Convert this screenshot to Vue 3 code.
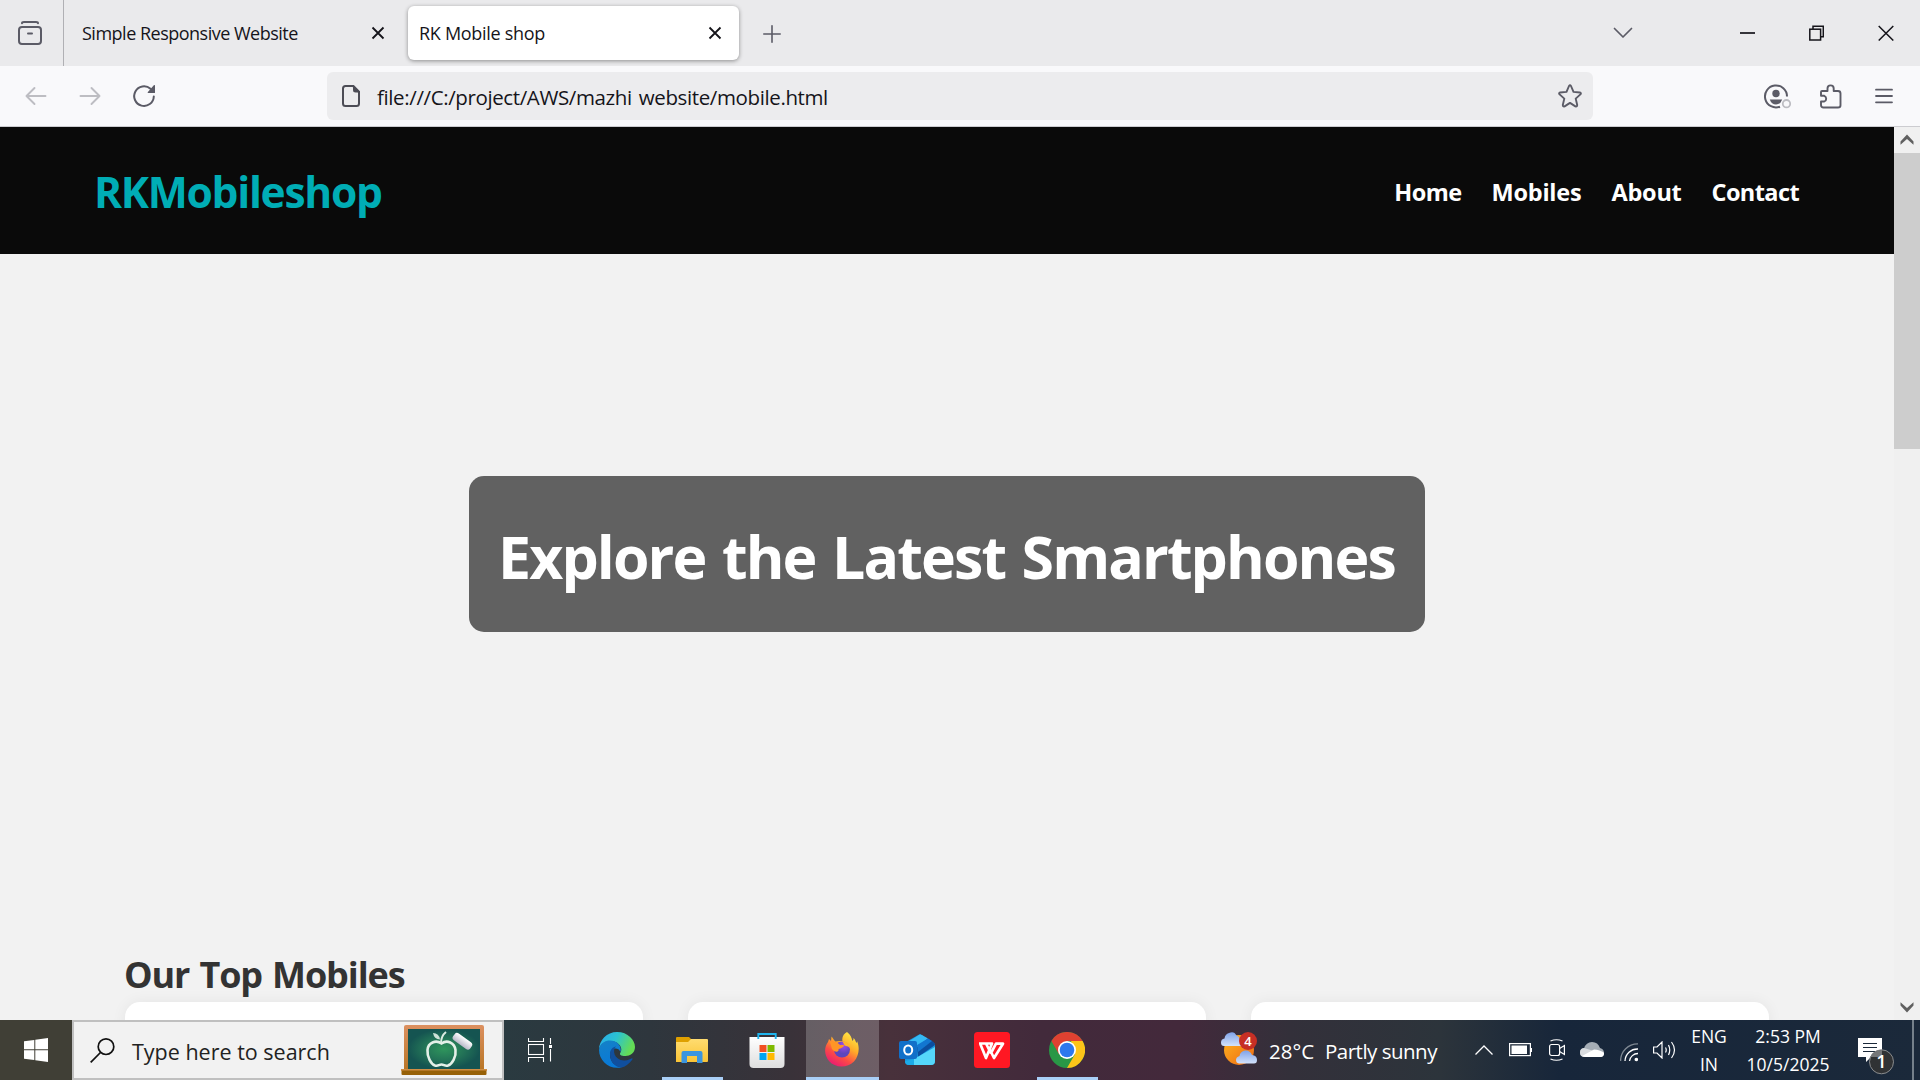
<script setup>
const links = [
  { label: 'Home', cls: 'n1' },
  { label: 'Mobiles', cls: 'n2' },
  { label: 'About', cls: 'n3' },
  { label: 'Contact', cls: 'n4' },
]
</script>

<template>
  <div class="screen">
    <div class="tabs">
      <div class="view">
        <svg width="24" height="24" viewBox="0 0 24 24" fill="none" stroke="#5b5b66" stroke-width="2" stroke-linecap="round"><path d="M4 2.2Q4 1 6 1H18Q20 1 20 2.2" /><rect x="1" y="6" width="22" height="17" rx="3" /><path d="M10 12.5H14" /></svg>
      </div>
      <div class="tab plain">
        <span class="t1">Simple Responsive Website</span>
        <svg width="14" height="14" viewBox="0 0 14 14" stroke="#15141a" stroke-width="1.8"><path d="M1.5 1.5L12.500 12.500M12.500 1.500L1.500 12.500" /></svg>
      </div>
      <div class="tab active">
        <span class="t2">RK Mobile shop</span>
        <svg width="14" height="14" viewBox="0 0 14 14" stroke="#15141a" stroke-width="1.8"><path d="M1.5 1.5L12.500 12.500M12.500 1.500L1.500 12.500" /></svg>
      </div>
      <svg class="plus" width="18" height="18" viewBox="0 0 18 18" stroke="#5b5b66" stroke-width="1.6" stroke-linecap="round"><path d="M9 .8V17.200M.8 9H17.200" /></svg>
      <svg class="down" width="20" height="12" viewBox="0 0 20 12" fill="none" stroke="#5b5b66" stroke-width="1.7" stroke-linecap="round" stroke-linejoin="round"><path d="M1.500 1.500L10 10L18.500 1.500" /></svg>
      <div class="wins">
        <svg width="15" height="16" viewBox="0 0 15 16"><path d="M0 8H15" stroke="#15141a" stroke-width="1.700" /></svg>
        <svg width="15" height="16" viewBox="0 0 15 16" fill="none" stroke="#15141a" stroke-width="1.500"><rect x=".8" y="4.200" width="10.800" height="10.800" /><path d="M4 4V1.200H14.300V11.700H12" /></svg>
        <svg width="16" height="16" viewBox="0 0 16 16" stroke="#15141a" stroke-width="1.500"><path d="M.7 1L15.300 15.500M15.300 1L.7 15.500" /></svg>
      </div>
    </div>

    <div class="bar">
      <svg class="back" width="22" height="20" viewBox="0 0 22 20" fill="none" stroke="#bdbdc2" stroke-width="1.900" stroke-linecap="round" stroke-linejoin="round"><path d="M9.500 2L1.500 10L9.500 18M1.500 10H20.500" /></svg>
      <svg class="fwd" width="22" height="20" viewBox="0 0 22 20" fill="none" stroke="#bdbdc2" stroke-width="1.900" stroke-linecap="round" stroke-linejoin="round"><path d="M12.500 2L20.500 10L12.500 18M20.500 10H1.500" /></svg>
      <svg class="reload" width="24" height="24" viewBox="0 0 24 24" fill="none"><path d="M21.800 12.500A9.800 9.800 0 1 1 18.500 4.800" stroke="#5b5b66" stroke-width="2" stroke-linecap="round" /><path d="M23 1.600V8.500Q23 9 22.500 9H16.200Q15 9 15.900 8L21.800 1.300Q23 .5 23 1.600Z" fill="#5b5b66" /></svg>
      <div class="url">
        <svg width="18" height="22" viewBox="0 0 18 22" fill="none"><path d="M11 1H3.500Q1 1 1 3.500V18.500Q1 21 3.500 21H14.500Q17 21 17 18.500V7Z" stroke="#4c4c55" stroke-width="2" /><path d="M11 0V5Q11 7.500 13.500 7.500H18V6.500L12 .3Z" fill="#4c4c55" /></svg>
        <span class="t3">file:///C:/project/AWS/mazhi website/mobile.html</span>
        <svg class="star" width="24" height="24" viewBox="0 0 24 24" fill="none" stroke="#5b5b66" stroke-width="1.900" stroke-linejoin="round"><path d="M11 2Q12 .6 13 2L15.500 7.900L21.800 8.500Q23.600 9 22.400 10.400L17.700 14.600L19.200 21Q19.200 23 17.400 22.400L12 18.900L6.600 22.400Q4.800 23 4.800 21L6.300 14.600L1.600 10.400Q.4 9 2.200 8.500L8.500 7.900Z" /></svg>
      </div>
      <div class="tools">
        <svg width="28" height="25" viewBox="0 0 28 25" fill="none"><path d="M23 12.500A11 11 0 1 0 16 22.700" stroke="#5b5b66" stroke-width="2" /><circle cx="12" cy="9.500" r="3.700" fill="#5b5b66" /><path d="M5.800 15.500H18.200Q16.500 20.500 12 20.500T5.800 15.500Z" fill="#5b5b66" /><circle cx="22.500" cy="19.700" r="3.700" stroke="#bdbdc2" stroke-width="1.800" /></svg>
        <svg width="22" height="25" viewBox="0 0 22 25" fill="none" stroke="#5b5b66" stroke-width="1.900" stroke-linejoin="round"><path d="M2 7H7.500V4.500A3.100 3.100 0 0 1 13.700 4.500V7H18Q20.500 7 20.500 9.500V21.200Q20.500 23.500 18 23.500H3.500Q1 23.500 1 21V17.500H4.300A3.100 3.100 0 0 0 4.300 11.800H1V8Q1 7 2 7Z" /></svg>
        <svg width="18" height="16" viewBox="0 0 18 16" stroke="#5b5b66" stroke-width="1.800" stroke-linecap="round"><path d="M1 1.700H17M1 8H17M1 14.300H17" /></svg>
      </div>
    </div>

    <div class="viewport">
      <div class="page">
        <header>
          <div class="logo">RKMobileshop</div>
          <nav><a v-for="l in links" :key="l.label" :class="l.cls">{{ l.label }}</a></nav>
        </header>
        <section class="hero"><h1><span>Explore the Latest Smartphones</span></h1></section>
        <section class="top">
          <h2>Our Top Mobiles</h2>
          <div class="cards"><div class="card"></div><div class="card"></div><div class="card"></div></div>
        </section>
      </div>
      <div class="scroll">
        <div class="btn up"><svg width="14" height="11" viewBox="0 0 14 11"><path d="M.5 7.500L7 .5L13.500 7.500V10.700L7 5L.5 10.700Z" fill="#606060" /></svg></div>
        <div class="thumb"></div>
        <div class="btn end"><svg width="14" height="11" viewBox="0 0 14 11"><path d="M.5 3.500L7 10.500L13.500 3.500V.3L7 6L.5 .3Z" fill="#606060" /></svg></div>
      </div>
    </div>

    <div class="taskbar">
      <div class="start"><svg width="24" height="24" viewBox="0 0 24 24" fill="#fff"><path d="M0 3.200L10.300 1.900V11.300H0ZM11.300 1.700L24 0V11.300H11.300ZM0 12.300H10.300V22L0 20.800ZM11.300 12.300H24V24L11.300 22.300Z" /></svg></div>
      <div class="search">
        <svg class="mag" width="25" height="25" viewBox="0 0 25 25" fill="none" stroke="#111" stroke-width="1.700"><circle cx="16" cy="8.700" r="7.800" /><path d="M10.500 14.500L.7 24.300" /></svg>
        <span class="t4">Type here to search</span>
        <svg class="board" width="86" height="50" viewBox="0 0 86 50">
          <defs>
            <radialGradient id="bg"><stop offset="0" stop-color="#2f955c" /><stop offset=".55" stop-color="#237457" /><stop offset="1" stop-color="#155451" /></radialGradient>
            <linearGradient id="wd" x1="0" y1="0" x2="0" y2="1"><stop offset="0" stop-color="#dc9060" /><stop offset="1" stop-color="#b87524" /></linearGradient>
            <linearGradient id="ck" x1="0" y1="0" x2="0" y2="1"><stop offset="0" stop-color="#fff" /><stop offset="1" stop-color="#b8b8c8" /></linearGradient>
          </defs>
          <rect x="3" y="0" width="80" height="46" rx="2" fill="url(#wd)" />
          <rect x="7" y="4" width="72" height="40" fill="url(#bg)" />
          <rect x="0" y="44" width="86" height="2" fill="#cf8e45" /><rect x=".5" y="45.500" width="85" height="4.500" rx="1" fill="#976107" />
          <path d="M40.500 18.500C35 14.500 27 17.500 26.500 25C26 32 30 39 34 40.500C37 41.500 38 39.500 40.500 39.500S44 41.500 47 40.500C51 39 55.500 32 54.500 25C53.500 17.500 46 14.500 40.500 18.500Z" fill="none" stroke="#e4f0e8" stroke-width="2.600" />
          <path d="M40 18Q40 11 45 7" fill="none" stroke="#dcebe2" stroke-width="2" /><path d="M39 14.500Q33 14 32 8Q38 8 39 14.500Z" fill="#cfe3d8" />
          <rect x="-10" y="-4.200" width="21" height="8.400" rx="3" transform="translate(61 16) rotate(36)" fill="url(#ck)" />
        </svg>
      </div>
      <div class="task tv"><svg width="24" height="24" viewBox="0 0 24 24" fill="none" stroke="#fff" stroke-width="1.100"><path d="M.5 0V3.500H15.500V0M.5 24V19.500H15.500V24M22.500 0V6M22.500 11V23.500" /><rect x=".5" y="6.500" width="15" height="10" /><rect x="21" y="7" width="3" height="3" fill="#fff" stroke="none" /></svg></div>
      <div class="task"><svg width="36" height="36" viewBox="0 0 36 36">
        <defs><linearGradient id="e1" x1="0" y1="0" x2="1" y2=".35"><stop offset="0" stop-color="#28a9ee" /><stop offset=".5" stop-color="#2bc3d2" /><stop offset="1" stop-color="#64dc55" /></linearGradient><linearGradient id="e2" x1="0" y1="0" x2=".3" y2="1"><stop offset="0" stop-color="#1581c6" /><stop offset="1" stop-color="#0879d8" /></linearGradient></defs>
        <path d="M0 18C0 8 8 0 18 0C29 0 36 8 36 15C36 21 31 24 26.500 24C21.500 24 20 22.500 21.500 20.500C24 17 21 10 13 9C6 8.500 1 12 0 18Z" fill="url(#e1)" />
        <path d="M0 18C1 11 6 8.500 11 8.500C18 8.500 23 14 21.500 20C19 14 11 16 11 23C11 30 17 35 23 35.200C11 38.500 0 29 0 18Z" fill="url(#e2)" />
        <path d="M11 22C11 17.500 14 14.800 17 14.500C13 18 15 28 25 28.500C29 28.700 31.500 26.800 33 26.300C34 26.200 33.500 27.500 33 28C30 32 26 35 22.500 35.500C15 35 11 29 11 22Z" fill="#104f9e" />
      </svg></div>
      <div class="task open"><svg width="32" height="26" viewBox="0 0 32 26"><defs><linearGradient id="f1" x1="0" y1="0" x2="0" y2="1"><stop offset="0" stop-color="#ffdc70" /><stop offset="1" stop-color="#fac436" /></linearGradient></defs><path d="M0 1Q0 0 1 0H13L15 2V6H0Z" fill="#dfa000" /><path d="M0 5H12L15 2H31Q32 2 32 3V24Q32 25 31 25H0Z" fill="url(#f1)" /><path d="M5.500 26V16Q5.500 14 7.500 14H24.500Q26.500 14 26.500 16V26H21V19H11V26Z" fill="#3b95df" /></svg></div>
      <div class="task"><svg width="36" height="36" viewBox="0 0 36 36"><defs><linearGradient id="s1" x1="0" y1="0" x2="0" y2="1"><stop offset="0" stop-color="#fff" /><stop offset="1" stop-color="#dedede" /></linearGradient></defs><path d="M.5 5H35.500V32Q35.500 36 31.500 36H4.500Q.5 36 .5 32Z" fill="url(#s1)" /><path d="M9.300 7V2H26.700V7" fill="none" stroke="#20b5ee" stroke-width="1.900" /><path d="M10.500 13H17.500V20H10.500Z" fill="#f25022" /><path d="M18.500 13H25.500V20H18.500Z" fill="#7fba00" /><path d="M10.500 21H17.500V28H10.500Z" fill="#00a4ef" /><path d="M18.500 21H25.500V28H18.500Z" fill="#ffb900" /></svg></div>
      <div class="task ff"><svg width="36" height="36" viewBox="0 0 36 36">
        <defs><linearGradient id="x1" x1=".85" y1="0" x2=".25" y2="1"><stop offset="0" stop-color="#fff24a" /><stop offset=".4" stop-color="#ffac28" /><stop offset=".7" stop-color="#fc4b45" /><stop offset="1" stop-color="#e81777" /></linearGradient><radialGradient id="x2" cx=".6" cy=".25"><stop offset="0" stop-color="#a44bea" /><stop offset="1" stop-color="#5c46bd" /></radialGradient></defs>
        <path d="M23 0C27 3 27.500 6 28.500 9C29.500 8 29.500 7 29.500 6C31 7 31.500 9.500 32.500 11C33 10.500 33 9.500 33 9C36 16 35 24 30 29.500C23 36.500 11 36 5 29C0 23 0 15 4 10L5 7L7 9L7.500 4.500C9 6 10 8.500 11.500 9.500C14 8.500 17 9 18.500 9C17.500 5 20 1.500 23 0Z" fill="url(#x1)" />
        <circle cx="18" cy="17.500" r="8" fill="url(#x2)" />
        <path d="M6 10C10 9 14 10 16 13H20C20 15 17 16.500 14.500 17C15.500 20 11 21 8 17Z" fill="#ff9526" /><path d="M18 9.500C23 9 26 12 26 16Q24 14 22 14C20 14 20 11 18 9.500Z" fill="#ffb52b" />
      </svg></div>
      <div class="task"><svg width="36" height="32" viewBox="0 0 36 32"><path d="M7 8L21 0L36 10V27Q36 31 32 31H10Q6 31 6 27V8Z" fill="#1996df" /><path d="M9 8L20 1Q21.500 .2 23 1L29 4.500L18 13Z" fill="#35b9f3" /><path d="M18 13L29 4.500L34.500 8Q36 9 36 11L19 23Z" fill="#0b4e9f" /><path d="M18 11L29 4.500L33 7L19 18Z" fill="#1276d0" /><path d="M15 25L36 13V27Q36 31 32 31H15Z" fill="#55d7fa" /><path d="M6 27L15 25V31H10Q6 31 6 27Z" fill="#1cabe8" /><rect y="7" width="18" height="18" rx="2" fill="#1170c9" /><ellipse cx="9.200" cy="16" rx="4" ry="4.600" fill="none" stroke="#fff" stroke-width="2" /></svg></div>
      <div class="task"><svg width="36" height="36" viewBox="0 0 36 36"><rect width="36" height="36" rx="3.500" fill="#ff1823" /><g fill="none" stroke="#fff" stroke-width="2.700" stroke-linejoin="round"><path d="M5 11.500H18L12 26L6.500 12.500M12 11.500L15 17.500M15.500 17L20 26L29 11.700H22L16.500 22" /></g></svg></div>
      <div class="task open"><svg width="36" height="36" viewBox="0 0 36 36"><circle cx="18" cy="18" r="18" fill="#299746" /><path d="M2.400 9A18 18 0 0 1 33.600 9H18L10.200 22.500Z" fill="#df4131" /><path d="M33.600 9A18 18 0 0 1 18 36L25.800 22.500L22 9Z" fill="#fcc419" /><circle cx="18" cy="18" r="9" fill="#fff" /><circle cx="18" cy="18" r="7.300" fill="#2c78ee" /></svg></div>

      <div class="weather">
        <svg width="36" height="36" viewBox="0 0 36 36"><defs><linearGradient id="w1" x1="0" y1="0" x2="1" y2="1"><stop offset="0" stop-color="#ffb51f" /><stop offset="1" stop-color="#ec6815" /></linearGradient><linearGradient id="w2" x1="0" y1="0" x2="0" y2="1"><stop offset="0" stop-color="#7fa2e7" /><stop offset="1" stop-color="#d3e2fb" /></linearGradient></defs><circle cx="18" cy="18" r="15" fill="url(#w1)" /><path d="M3 14Q0 14 0 10.500Q0 7 3.500 6.500Q4 2 8 1Q13-1.500 15.500 3.500Q20 5 20 14Z" fill="url(#w2)" /><path d="M18 31.500Q15 31 15 28Q15 25 18.500 24Q19 19.500 24 18.500Q29 18 31 23Q36 23.500 36 28Q36 31.500 33 31.500Z" fill="url(#w2)" /><circle cx="27" cy="9" r="9" fill="#c62f25" /><text x="27" y="13.500" text-anchor="middle" font-size="13" font-weight="600" fill="#fff">4</text></svg>
        <span class="t5">28°C</span><span class="t6">Partly sunny</span>
      </div>
      <div class="tray">
        <svg class="i1" width="18" height="10" viewBox="0 0 18 10" fill="none" stroke="#fff" stroke-width="1.300"><path d="M.5 9.500L9 1L17.500 9.500" /></svg>
        <svg class="i2" width="23" height="14" viewBox="0 0 23 14"><rect x=".6" y=".6" width="20.800" height="12" fill="none" stroke="#fff" stroke-width="1.200" /><path d="M2.500 2.500H18V11H2.500ZM21.500 5H23V9H21.500Z" fill="#fff" /></svg>
        <svg class="i3" width="16" height="22" viewBox="0 0 16 22" fill="none" stroke="#fff" stroke-width="1.200"><rect x=".6" y="5.500" width="10" height="11" rx="2" /><path d="M10.600 9.500L15.400 6.500V15.500L10.600 12.500M1.500 2Q7.500-.5 13.500 2M1.500 20Q7.500 22.500 13.500 20" /></svg>
        <svg class="i4" width="24" height="16" viewBox="0 0 24 16"><path d="M4 15Q0 14.500 0 10.500Q0 7 4 6.500Q6 0 12 0Q18 0 20 6Q24 7 24 11Q24 15 20 15Z" fill="#a5adb5" /><path d="M4 15Q0 14.500 0 10.500Q0 6 4 6L14 9L24 10.500Q24 15 20 15Z" fill="#d9dcdf" /><path d="M2 14L14 7.500Q20 7.500 24 11Q24 15 20 15H5Z" fill="#fff" /></svg>
        <svg class="i5" width="18" height="19" viewBox="0 0 18 19" fill="none" stroke-width="1.300"><path d="M.6 18A17 17 0 0 1 18 .8" stroke="#7f8993" /><path d="M5 18A12.500 12.500 0 0 1 18 6M9.500 18A8.500 8.500 0 0 1 18 10.500" stroke="#fff" /><circle cx="16.300" cy="16.500" r="1.800" fill="#fff" /></svg>
        <svg class="i6" width="23" height="18" viewBox="0 0 23 18" fill="none" stroke="#fff" stroke-width="1.200"><path d="M.6 6V12H4L9 17V1L4 6ZM12.500 6.500Q14 9 12.500 11.500M15.500 4Q18 9 15.500 14M18.500 1Q24.500 9 18.500 17" /></svg>
      </div>
      <div class="lang"><span class="t7">ENG</span><span>IN</span></div>
      <div class="clock"><span class="t8">2:53 PM</span><span class="t9">10/5/2025</span></div>
      <svg class="note" width="36" height="38" viewBox="0 0 36 38"><path d="M0 0H24V19H13L8 24V19H0Z" fill="#fff" /><path d="M5 5.500H19M5 9.500H19M5 13.500H19" stroke="#1b293a" stroke-width="1.100" /><circle cx="23.500" cy="23.800" r="12" fill="#303234" stroke="#8a8c8e" /><path d="M12 20A12 12 0 0 1 24 12V19H13Z" fill="#747678" /><text x="23.500" y="30" text-anchor="middle" font-size="18" font-weight="600" fill="#fff">1</text></svg>
      <div class="desk"></div>
    </div>
  </div>
</template>

<style>
html, body { margin: 0; overflow: hidden; }
</style>
<style scoped>
.screen { width: 1920px; height: 1080px; display: flex; flex-direction: column; overflow: hidden; font-family: "Segoe UI", "Open Sans", "Noto Sans", sans-serif; color: #15141a; }
.screen * { box-sizing: border-box; }
svg { display: block; flex: none; }
span, a { white-space: nowrap; }
.tabs { height: 66px; background: #eaeaec; display: flex; align-items: center; flex: none; }
.view { width: 64px; height: 66px; border-right: 1px solid #b0b0b4; padding: 21px 0 0 18px; }
.tab { display: flex; align-items: center; justify-content: space-between; height: 54px; font-size: 18px; }
.plain { width: 344px; padding: 0 23px 0 18px; }
.active { width: 331px; padding: 0 17px 0 11px; background: #fff; border-radius: 6px; box-shadow: 0 1px 4px rgba(0,0,0,.4); }
.t1 { letter-spacing: -.5px; }
.t2 { letter-spacing: -.3px; }
.plus { margin: 2px 0 0 24px; }
.down { margin-left: 832px; }
.wins { display: flex; gap: 54px; margin-left: 107px; }
.bar { height: 61px; flex: none; background: #f9f9fb; border-bottom: 1px solid #ccccd0; display: flex; align-items: center; }
.back { margin-left: 25px; }
.fwd { margin-left: 32px; }
.reload { margin-left: 31px; }
.url { width: 1266px; height: 48px; margin-left: 171px; background: #ececee; border-radius: 6px; display: flex; align-items: center; padding: 0 11px 0 15px; font-size: 20.500px; }
.t3 { margin-left: 17px; padding-top: 2px; letter-spacing: -.38px; word-spacing: 2px; }
.star { margin-left: auto; }
.tools { display: flex; align-items: center; margin-left: 171px; gap: 28px; }
.tools svg:last-child { margin-left: 5px; }
.viewport { height: 893px; flex: none; display: flex; }
.page { width: 1894px; background: #f2f2f2; overflow: hidden; }
header { height: 127px; background: #0a0a0a; display: flex; align-items: center; justify-content: space-between; padding: 0 95px; }
.logo { color: #00adb5; font-weight: 700; font-size: 42.500px; padding-top: 2px; letter-spacing: -1.270px; text-indent: -1px; }
nav { display: flex; gap: 30px; color: #fff; font-weight: 700; font-size: 23.500px; padding-top: 3px; }
.n1 { letter-spacing: -.6px; }
.n2 { letter-spacing: -.2px; }
.n3 { letter-spacing: -.25px; }
.n4 { letter-spacing: -.6px; }
.hero { height: 600px; display: flex; justify-content: center; align-items: center; }
h1 { margin: 0; width: 956px; height: 156px; border-radius: 15px; background: #616161; color: #fff; font-size: 59px; line-height: 80px; padding: 40px 0 0 29px; letter-spacing: -1.880px; word-spacing: 3px; }
.top { padding: 0 125px; }
h2 { margin: 0; height: 148px; font-size: 36px; line-height: 48px; color: #333; padding-top: 97px; letter-spacing: -1.100px; word-spacing: 1.800px; text-indent: -1px; }
.cards { display: flex; gap: 45px; }
.card { height: 400px; width: 518px; background: #fff; border-radius: 15px; box-shadow: 0 0 15px rgba(0,0,0,.06); }
.scroll { width: 26px; background: #f0f0f0; display: flex; flex-direction: column; }
.btn { height: 26px; display: flex; align-items: center; justify-content: center; }
.up { padding-bottom: 2px; }
.thumb { height: 296px; background: #cdcdcd; }
.end { margin-top: auto; }
.taskbar { height: 60px; flex: none; display: flex; color: #fff; background: linear-gradient(90deg, #403f36 0, #403f36 72px, #2a3a40 504px, #2e363d 650px, #393239 790px, #48313b 890px, #422a3b 1040px, #43293b 1180px, #33303a 1290px, #2c343b 1440px, #17263a 1560px, #1b293a 1920px); }
.start { width: 72px; padding: 18px 24px; }
.search { width: 432px; height: 60px; border: 2px solid #c0c0c0; background: #f2f2f2; color: #222; display: flex; font-size: 21.500px; }
.mag { margin: 16px 0 0 16px; }
.t4 { margin-left: 17px; line-height: 58px; padding-top: 1px; }
.board { margin: 3px 15px 0 auto; }
.task { width: 75px; height: 60px; display: flex; align-items: center; justify-content: center; padding-right: 1px; }
.tv { width: 72px; margin-right: 4px; padding: 0; }
.open { background: linear-gradient(#a9cff7, #a9cff7) center bottom / 61px 3px no-repeat; }
.ff { width: 73px; margin: 0 1px; border-bottom: 3px solid #a9cff7; background: rgba(255,255,255,.22); }
.ff svg { margin-top: 3px; }
.weather { display: flex; align-items: center; margin-left: 116px; font-size: 20.500px; width: 254px; }
.t5 { margin-left: 12px; padding-top: 1px; width: 56px; }
.t6 { padding-top: 1px; letter-spacing: -.5px; }
.tray { display: flex; align-items: center; width: 218px; }
.i2 { margin-left: 16px; }
.i3 { margin-left: 17px; }
.i4 { margin-left: 15px; }
.i5 { margin: 4px 0 0 16px; }
.i6 { margin-left: 15px; }
.lang, .clock { display: flex; flex-direction: column; align-items: center; font-size: 17.500px; line-height: 28px; padding-top: 2px; }
.lang { width: 32px; }
.clock { width: 82px; margin-left: 22px; }
.note { margin: 18px 0 0 29px; }
.desk { width: 2px; background: #75808a; margin-left: 18px; }
</style>
